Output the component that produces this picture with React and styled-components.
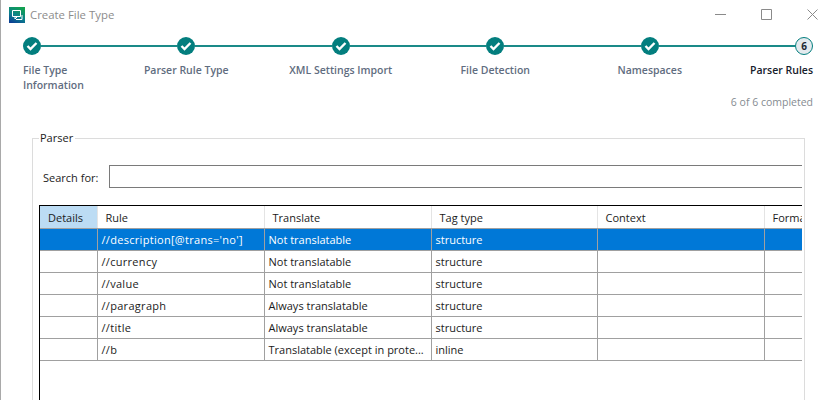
import React from "react";
import styled, { createGlobalStyle } from "styled-components";

const GlobalStyle = createGlobalStyle`
  html, body {
    margin: 0;
    height: 400px;
    overflow: hidden;
    background: #fff;
  }
  * {
    box-sizing: border-box;
  }
`;

const Window = styled.div`
  position: relative;
  width: 835px;
  height: 400px;
  overflow: hidden;
  border-left: 1px solid #a9a9a9;
  font-family: "Open Sans", "Noto Sans", sans-serif;
  font-size: 12px;
  color: #1b1b1b;
  background: #fff;
`;

const EdgeTick = styled.span`
  position: absolute;
  left: -1px;
  top: 323px;
  width: 1px;
  height: 6px;
  background: #3a7fc0;
`;

const TitleBar = styled.div`
  display: flex;
  align-items: center;
  height: 30px;
  padding-left: 8px;
`;

const AppTitle = styled.span`
  margin: 0 0 2px 5px;
  color: #8c8c8c;
  font-size: 11.4px;
`;

const WindowControls = styled.div`
  display: flex;
  align-items: center;
  margin: 0 0 2px auto;
  padding-right: 17px;
  gap: 35px;
`;

const Stepper = styled.div`
  padding: 7px 22px 0 22px;
`;

const Track = styled.div`
  display: flex;
  align-items: center;
`;

const Done = styled.span`
  display: flex;
  align-items: center;
  justify-content: center;
  flex: none;
  width: 18px;
  height: 18px;
  border-radius: 50%;
  background: #037e7e;
`;

const Current = styled.span`
  display: flex;
  align-items: center;
  justify-content: center;
  flex: none;
  width: 18px;
  height: 18px;
  border-radius: 50%;
  border: 1px solid #037e7e;
  background: #e4eaee;
  color: #1c2733;
  font-size: 10px;
  font-weight: 700;
`;

const Connector = styled.span`
  flex: 1;
  height: 2px;
  background: #1a8a88;
`;

const StepLabels = styled.div`
  display: grid;
  grid-template-columns: 86px repeat(4, 154.5px) 86px;
  margin-top: 8px;
`;

const StepLabel = styled.div`
  text-align: ${(p) => p.$align};
  font-size: 10.5px;
  font-weight: 600;
  line-height: 15px;
  color: ${(p) => (p.$active ? "#16202b" : "#5f6d80")};
`;

const Progress = styled.div`
  margin-top: 2px;
  text-align: right;
  font-size: 10.5px;
  line-height: 15px;
  color: #858b91;
`;

const Fieldset = styled.fieldset`
  margin: 20px 30px 0 31px;
  padding: 19px 2px 0 6px;
  height: 300px;
  border: 1px solid #dcdcdc;
  min-inline-size: 0;
`;

const Legend = styled.legend`
  margin-left: 0;
  padding: 0 2px 2px 1px;
  font-size: 11px;
  line-height: 15px;
`;

const SearchRow = styled.div`
  display: flex;
  align-items: center;
  height: 22px;
  padding-left: 4px;
`;

const SearchLabel = styled.label`
  width: 66px;
  font-size: 11px;
`;

const SearchInput = styled.div`
  flex: 1;
  height: 23px;
  margin-bottom: 2px;
  border: 1px solid #7a7a7a;
  border-right: none;
`;

const GridFrame = styled.div`
  margin-top: 17px;
  height: 220px;
  overflow: hidden;
  border-top: 1px solid #000;
  border-left: 1px solid #000;
`;

const Table = styled.table`
  width: 869px;
  table-layout: fixed;
  border-collapse: collapse;
  font-size: 11px;
`;

const HeadCell = styled.th`
  height: 22px;
  padding: 2px 0 0 8px;
  font-weight: 400;
  text-align: left;
  white-space: nowrap;
  overflow: hidden;
  border-right: 1px solid #e4e4e4;
  border-bottom: 1px solid #a0a0a0;
  background: ${(p) => (p.$highlight ? "#bcdcf4" : "#fff")};
`;

const Row = styled.tr`
  background: ${(p) => (p.$selected ? "#0078d7" : "#fff")};
  color: ${(p) => (p.$selected ? "#fff" : "#1b1b1b")};
`;

const Cell = styled.td`
  height: 22px;
  padding: 0 0 0 4px;
  white-space: nowrap;
  overflow: hidden;
  border-right: 1px solid #a0a0a0;
  border-bottom: 1px solid #a0a0a0;
`;

const RuleCell = styled(Cell)`
  letter-spacing: 0.3px;
`;

const steps = [
  { name: "File Type Information", align: "left" },
  { name: "Parser Rule Type", align: "center" },
  { name: "XML Settings Import", align: "center" },
  { name: "File Detection", align: "center" },
  { name: "Namespaces", align: "center" },
  { name: "Parser Rules", align: "right", active: true },
];

const columns = [
  { name: "Details", width: 57, highlight: true },
  { name: "Rule", width: 167 },
  { name: "Translate", width: 167 },
  { name: "Tag type", width: 166 },
  { name: "Context", width: 167 },
  { name: "Format", width: 145 },
];

const rules = [
  ["//description[@trans='no']", "Not translatable", "structure"],
  ["//currency", "Not translatable", "structure"],
  ["//value", "Not translatable", "structure"],
  ["//paragraph", "Always translatable", "structure"],
  ["//title", "Always translatable", "structure"],
  ["//b", "Translatable (except in prote...", "inline"],
];

const AppIcon = () => (
  <svg width="16" height="16" viewBox="0 0 16 16">
    <defs>
      <linearGradient id="appIcon" x1="0.7" y1="0" x2="0.2" y2="1">
        <stop offset="0" stopColor="#12a150" />
        <stop offset="0.55" stopColor="#0a7f8c" />
        <stop offset="1" stopColor="#0b3f94" />
      </linearGradient>
    </defs>
    <rect width="16" height="16" fill="url(#appIcon)" />
    <path d="M3.5 3.5h8v6h-8z M6 9.5v2.5l2.5-2.5" fill="none" stroke="#fff" />
    <path d="M7 12.5h6V8" fill="none" stroke="#fff" />
  </svg>
);

const Check = () => (
  <svg width="12" height="10" viewBox="0 0 12 10">
    <path d="M1.5 5l3 3 6-6" fill="none" stroke="#fff" strokeWidth="2.4" />
  </svg>
);

const Controls = () => (
  <WindowControls>
    <svg width="11" height="11" viewBox="0 0 11 11">
      <path d="M0 5.5h11" stroke="#8a8a8a" />
    </svg>
    <svg width="11" height="11" viewBox="0 0 11 11">
      <path d="M.5.5h10v10H.5z" fill="none" stroke="#8a8a8a" />
    </svg>
    <svg width="11" height="11" viewBox="0 0 11 11">
      <path d="M.5.5l10 10M10.5.5l-10 10" stroke="#8a8a8a" />
    </svg>
  </WindowControls>
);

export default function App() {
  return (
    <Window>
      <GlobalStyle />
      <EdgeTick />
      <TitleBar>
        <AppIcon />
        <AppTitle>Create File Type</AppTitle>
        <Controls />
      </TitleBar>

      <Stepper>
        <Track>
          {steps.map((step, i) => (
            <React.Fragment key={step.name}>
              {i > 0 && <Connector />}
              {step.active ? <Current>6</Current> : <Done><Check /></Done>}
            </React.Fragment>
          ))}
        </Track>
        <StepLabels>
          {steps.map((step) => (
            <StepLabel key={step.name} $align={step.align} $active={step.active}>
              {step.name}
            </StepLabel>
          ))}
        </StepLabels>
        <Progress>6 of 6 completed</Progress>
      </Stepper>

      <Fieldset>
        <Legend>Parser</Legend>
        <SearchRow>
          <SearchLabel>Search for:</SearchLabel>
          <SearchInput />
        </SearchRow>
        <GridFrame>
          <Table>
            <colgroup>
              {columns.map((col) => (
                <col key={col.name} width={col.width} />
              ))}
            </colgroup>
            <thead>
              <tr>
                {columns.map((col) => (
                  <HeadCell key={col.name} $highlight={col.highlight}>{col.name}</HeadCell>
                ))}
              </tr>
            </thead>
            <tbody>
              {rules.map((rule, i) => (
                <Row key={rule[0]} $selected={i === 0}>
                  <Cell />
                  <RuleCell>{rule[0]}</RuleCell>
                  <Cell>{rule[1]}</Cell>
                  <Cell>{rule[2]}</Cell>
                  <Cell />
                  <Cell />
                </Row>
              ))}
            </tbody>
          </Table>
        </GridFrame>
      </Fieldset>
    </Window>
  );
}
